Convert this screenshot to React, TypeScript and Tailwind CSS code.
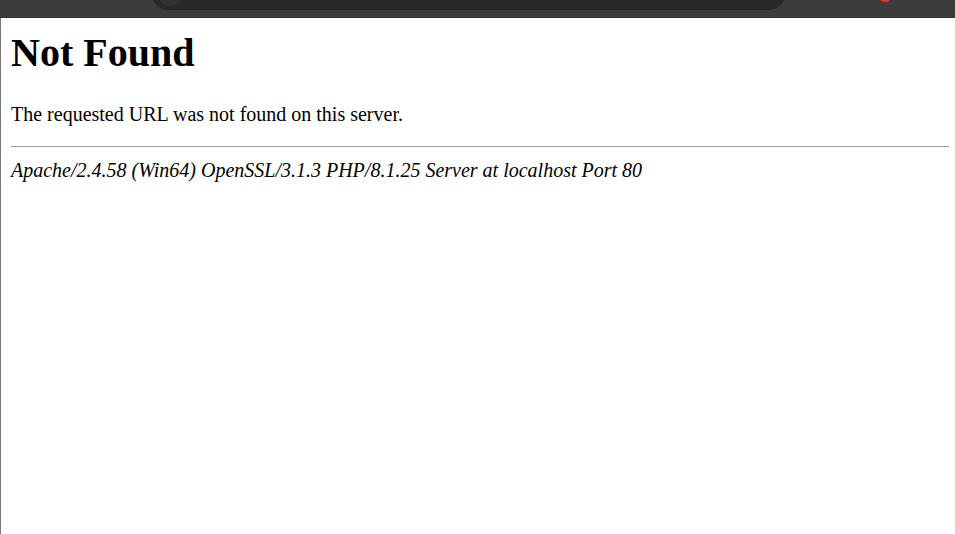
export default function App() {
  return (
    <div className="h-[534px] w-[955px] overflow-hidden bg-white flex flex-col">
      {/* browser chrome strip, only its bottom edge shows */}
      <div className="h-[18px] shrink-0 overflow-hidden bg-[#3c3c3c] border-b border-[#333333] flex items-end">
        <div className="ml-[152px] h-[32px] w-[633px] shrink-0 rounded-full bg-[#282828] mb-[7px] flex items-center pl-[6px]">
          <div className="h-[24px] w-[24px] rounded-full bg-[#333333]" />
        </div>
        <div className="ml-[93px] h-[14px] w-[14px] shrink-0 rounded-full bg-[#e8363c] mb-[15px]" />
      </div>

      {/* page */}
      <div
        className="flex-1 border-l border-[#7a7a7a] pl-[10px] pr-[6px] text-black"
        style={{ fontFamily: '"Liberation Serif", "Times New Roman", serif' }}
      >
        <h1 className="mt-[12px] text-[40px] font-bold leading-[46px]">Not Found</h1>
        <p className="mt-[27px] text-[20px] leading-[23px]">
          The requested URL was not found on this server.
        </p>
        <hr className="mt-[20px] border-0 border-t border-[#a0a0a0]" />
        <address className="mt-[12px] text-[20px] italic leading-[23px]">
          Apache/2.4.58 (Win64) OpenSSL/3.1.3 PHP/8.1.25 Server at localhost Port 80
        </address>
      </div>
    </div>
  );
}
